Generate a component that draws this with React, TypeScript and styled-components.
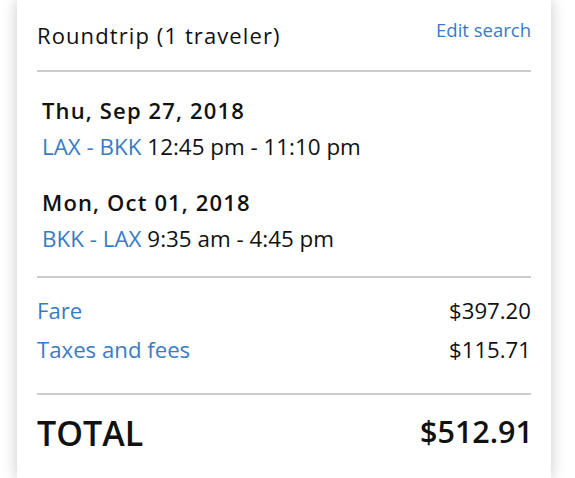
import React from 'react';
import styled, {createGlobalStyle} from 'styled-components'

const GlobalStyle = createGlobalStyle`
  body {
    margin: 0;
    background: #fff;
    font-family: "Open Sans", "Liberation Sans", sans-serif;
    color: #111;
  }
`;

const Card = styled.div`
  margin: 0 0 0 17px;
  width: 534px;
  min-height: 478px;
  box-sizing: border-box;
  background: #fff;
  padding: 0 20px;
  box-shadow: 0 0 14px rgba(0, 0, 0, 0.22);
`;

const Header = styled.div`
  display: flex;
  justify-content: space-between;
  align-items: flex-start;
  padding: 20px 0 20px;
  border-bottom: 2px solid #cccccc;
`;

const Title = styled.span`
  font-size: 22px;
  line-height: 30px;
  letter-spacing: 1.1px;
`;

const Link = styled.a`
  color: #3a7bc4;
  font-size: 18.5px;
  line-height: 20px;
  text-decoration: none;
  cursor: pointer;
`;

const Itinerary = styled.div`
  padding: 23px 0 22px 5px;
  border-bottom: 2px solid #cccccc;
`;

const Leg = styled.div`
  margin-bottom: 25px;
  &:last-child { margin-bottom: 0; }
`;

const LegDate = styled.div`
  font-size: 22px;
  font-weight: 600;
  line-height: 30px;
  letter-spacing: 1.15px;
  margin-bottom: 7px;
`;

const LegRoute = styled.div`
  font-size: 22.4px;
  line-height: 30px;
`;

const Code = styled.span`
  color: #3a7bc4;
`;

const Prices = styled.div`
  padding: 18px 0 28px;
  border-bottom: 2px solid #cccccc;
`;

const PriceRow = styled.div`
  display: flex;
  justify-content: space-between;
  font-size: 22.2px;
  line-height: 30px;
  margin-bottom: 9px;
  &:last-child { margin-bottom: 0; }
`;

const Total = styled.div`
  display: flex;
  justify-content: space-between;
  align-items: center;
  padding: 18px 0;
  font-weight: 600;
`;

const TotalLabel = styled.span`
  font-size: 34px;
  line-height: 40px;
`;

const TotalAmount = styled.span`
  font-size: 30.5px;
  line-height: 40px;
  margin: -4px -2px 0 0;
`;

const legs = [
    {date: 'Thu, Sep 27, 2018', route: 'LAX - BKK', time: '12:45 pm - 11:10 pm'},
    {date: 'Mon, Oct 01, 2018', route: 'BKK - LAX', time: '9:35 am - 4:45 pm'},
];

const fees = [
    {label: 'Fare', amount: '$397.20'},
    {label: 'Taxes and fees', amount: '$115.71'},
];

export default function App() {
    return (
        <>
            <GlobalStyle/>
            <Card>
                <Header>
                    <Title>Roundtrip (1 traveler)</Title>
                    <Link>Edit search</Link>
                </Header>
                <Itinerary>
                    {legs.map(leg => (
                        <Leg key={leg.date}>
                            <LegDate>{leg.date}</LegDate>
                            <LegRoute><Code>{leg.route}</Code> {leg.time}</LegRoute>
                        </Leg>
                    ))}
                </Itinerary>
                <Prices>
                    {fees.map(f => (
                        <PriceRow key={f.label}>
                            <Code>{f.label}</Code>
                            <span>{f.amount}</span>
                        </PriceRow>
                    ))}
                </Prices>
                <Total>
                    <TotalLabel>TOTAL</TotalLabel>
                    <TotalAmount>$512.91</TotalAmount>
                </Total>
            </Card>
        </>
    )
}
